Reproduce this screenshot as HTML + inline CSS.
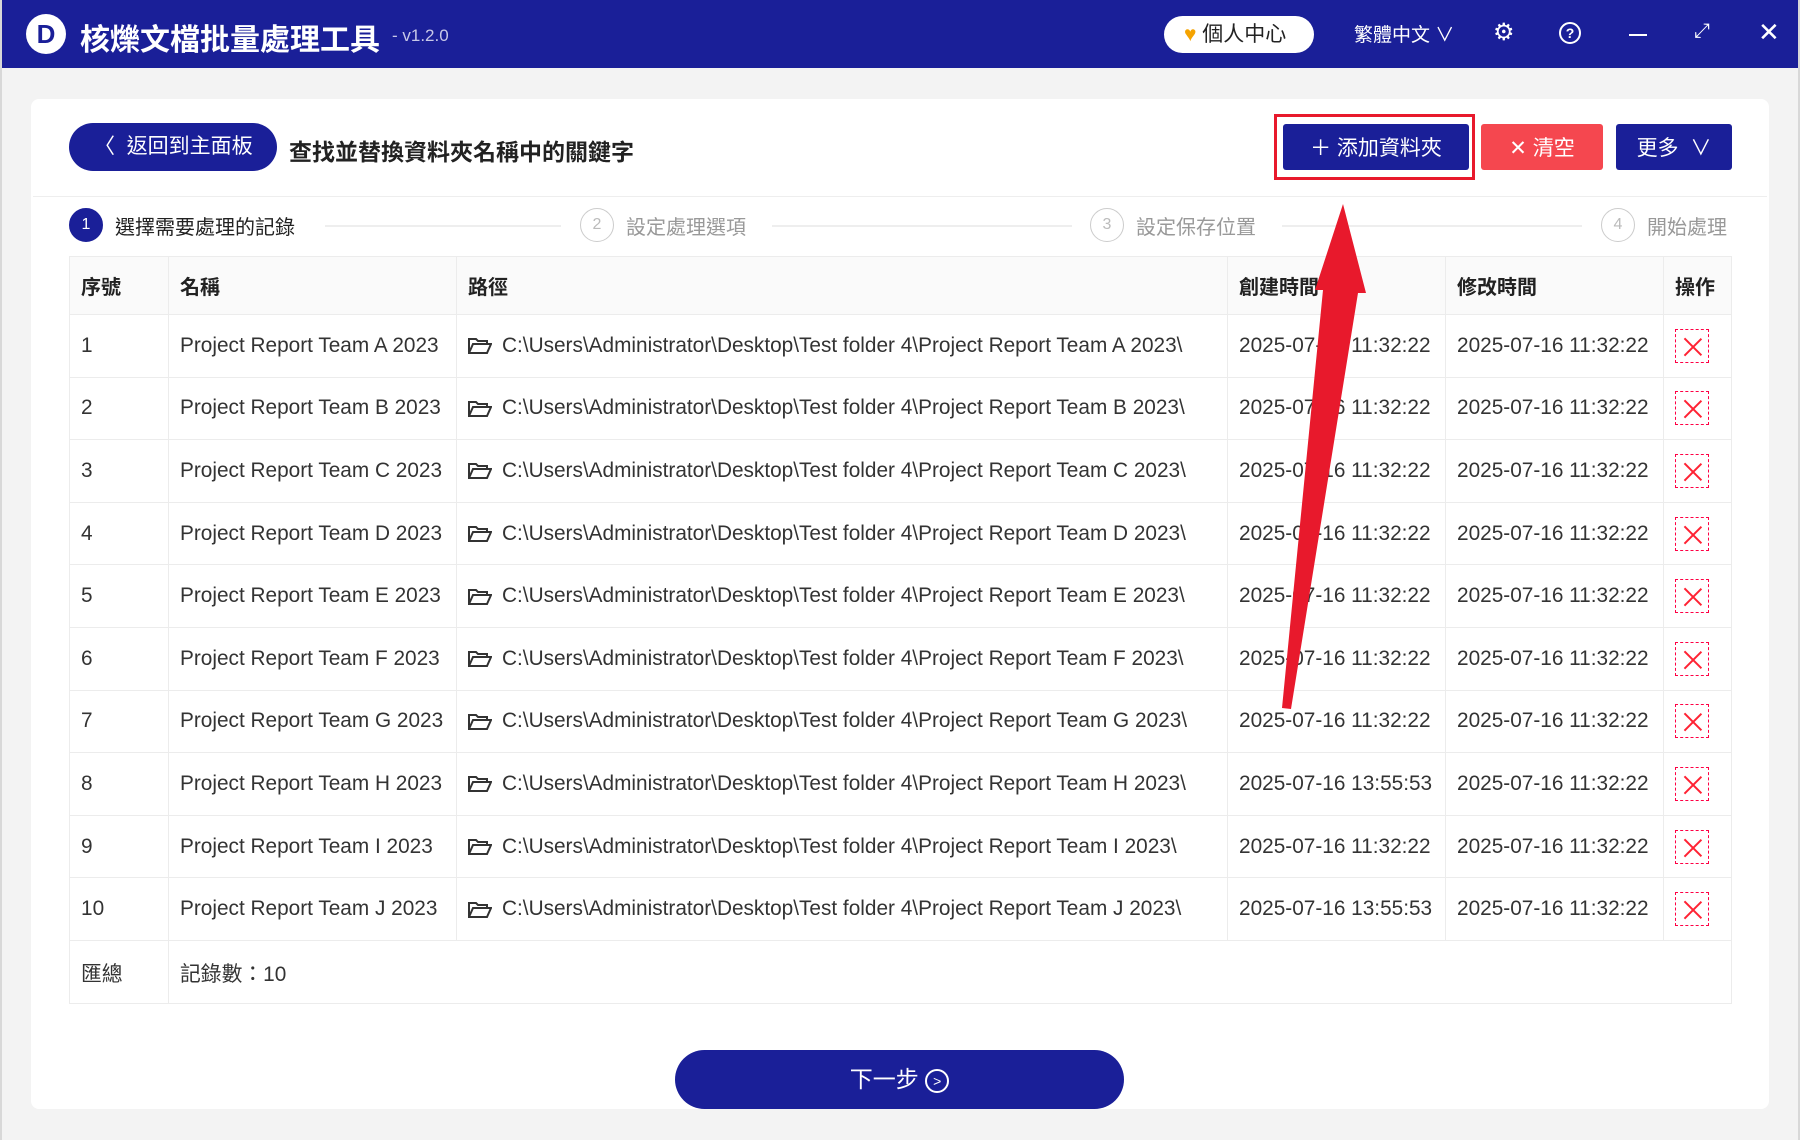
<!DOCTYPE html>
<html><head><meta charset="utf-8">
<style>
*{margin:0;padding:0;box-sizing:border-box}
body{width:1800px;height:1140px;overflow:hidden;background:#d8d8d8;font-family:"Liberation Sans","Noto Sans CJK TC",sans-serif;position:relative}
.win{position:absolute;left:2px;top:0;width:1796px;height:1140px;background:#f3f3f3}
.hdr{position:absolute;left:0;top:0;width:100%;height:68px;background:#1a1f98;color:#fff}
.abs{position:absolute}
.card{position:absolute;left:29px;top:99px;width:1738px;height:1010px;background:#fff;border-radius:8px}
.btn{position:absolute;color:#fff;font-size:21px;display:flex;align-items:center;justify-content:center;border-radius:3px}
table{position:absolute;left:67px;top:256px;width:1663px;border-collapse:collapse;font-size:20.8px;color:#333}
td,th{border:1px solid #ececec;text-align:left;padding:0 11px;white-space:nowrap}
th{height:58px;background:#fafafa;font-weight:bold;color:#222;font-size:20px}
td{height:62.6px}
.x{display:inline-block;width:34px;height:34px;border:1px dashed #f04;position:relative;vertical-align:middle}
.x:before,.x:after{content:"";position:absolute;left:16px;top:5px;width:1.5px;height:24px;background:#f23;transform:rotate(45deg)}
.x:after{transform:rotate(-45deg)}
.fd{display:inline-block;vertical-align:middle;margin-right:10px}
.step{position:absolute;top:208px;font-size:20px;color:#999;display:flex;align-items:center}
.step i{display:inline-block;width:34px;height:34px;border-radius:50%;border:1.5px solid #ccc;font-style:normal;font-size:16px;text-align:center;line-height:31px;margin-right:12px;color:#bbb}
.line{position:absolute;top:225px;height:2px;background:#eee}
</style></head><body>
<div class="win">
<div class="hdr">
 <div class="abs" style="left:24px;top:14px;width:40px;height:40px;border-radius:50%;background:#fff;color:#1a1f98;font-weight:bold;font-size:26px;text-align:center;line-height:40px">D</div>
 <div class="abs" style="left:78px;top:15px;font-size:30px;font-weight:bold">核爍文檔批量處理工具</div>
 <div class="abs" style="left:390px;top:26px;font-size:17px;color:#c8c8e8">- v1.2.0</div>
 <div class="abs" style="left:1162px;top:16px;width:150px;height:37px;border-radius:19px;background:#fff;color:#222;font-size:21px;line-height:37px;padding-left:20px"><span style="color:#f5a300">♥</span> 個人中心</div>
 <div class="abs" style="left:1352px;top:20px;font-size:19px">繁體中文 ∨</div>
 <div class="abs" style="left:1491px;top:21px;font-size:24px;line-height:24px">⚙</div>
 <div class="abs" style="left:1557px;top:22px;width:22px;height:22px;border:2px solid #fff;border-radius:50%;font-size:14px;text-align:center;line-height:18px;font-weight:bold">?</div>
 <div class="abs" style="left:1627px;top:34px;width:18px;height:2px;background:#fff"></div>
 <div class="abs" style="left:1692px;top:20px;font-size:20px">⤢</div>
 <div class="abs" style="left:1756px;top:17px;font-size:26px">✕</div>
</div>
<div class="card"></div>
<div class="abs" style="left:67px;top:123px;width:208px;height:48px;border-radius:24px;background:#1a1f98;color:#fff;font-size:21px;line-height:48px;padding-left:25px">〈&nbsp; 返回到主面板</div>
<div class="abs" style="left:287px;top:133px;font-size:23px;font-weight:bold;color:#222">查找並替換資料夾名稱中的關鍵字</div>
<div class="abs" style="left:1272px;top:114px;width:201px;height:66px;border:3px solid #e8192c"></div>
<div class="btn" style="left:1281px;top:124px;width:186px;height:46px;background:#1a1f98">＋ 添加資料夾</div>
<div class="btn" style="left:1479px;top:124px;width:122px;height:46px;background:#f5474f">✕ 清空</div>
<div class="btn" style="left:1614px;top:124px;width:116px;height:46px;background:#1a1f98">更多 &nbsp;∨</div>
<div class="abs" style="left:31px;top:196px;width:1734px;height:1px;background:#eee"></div>
<div class="step" style="left:67px;color:#222"><i style="background:#1a1f98;border-color:#1a1f98;color:#fff">1</i>選擇需要處理的記錄</div>
<div class="line" style="left:323px;width:236px"></div>
<div class="step" style="left:578px"><i>2</i>設定處理選項</div>
<div class="line" style="left:770px;width:300px"></div>
<div class="step" style="left:1088px"><i>3</i>設定保存位置</div>
<div class="line" style="left:1280px;width:300px"></div>
<div class="step" style="left:1599px"><i>4</i>開始處理</div>
<table>
<tr><th style="width:99px">序號</th><th style="width:288px">名稱</th><th style="width:771px">路徑</th><th style="width:218px">創建時間</th><th style="width:218px">修改時間</th><th>操作</th></tr>
<tr><td>1</td><td>Project Report Team A 2023</td><td><svg class="fd" width="24" height="18" viewBox="0 0 24 18"><path d="M1 16V2h7l2 2h9v3M1 16l4-9h18l-4 9z" fill="none" stroke="#333" stroke-width="2"/></svg>C:\Users\Administrator\Desktop\Test folder 4\Project Report Team A 2023\</td><td>2025-07-16 11:32:22</td><td>2025-07-16 11:32:22</td><td><span class="x"></span></td></tr>
<tr><td>2</td><td>Project Report Team B 2023</td><td><svg class="fd" width="24" height="18" viewBox="0 0 24 18"><path d="M1 16V2h7l2 2h9v3M1 16l4-9h18l-4 9z" fill="none" stroke="#333" stroke-width="2"/></svg>C:\Users\Administrator\Desktop\Test folder 4\Project Report Team B 2023\</td><td>2025-07-16 11:32:22</td><td>2025-07-16 11:32:22</td><td><span class="x"></span></td></tr>
<tr><td>3</td><td>Project Report Team C 2023</td><td><svg class="fd" width="24" height="18" viewBox="0 0 24 18"><path d="M1 16V2h7l2 2h9v3M1 16l4-9h18l-4 9z" fill="none" stroke="#333" stroke-width="2"/></svg>C:\Users\Administrator\Desktop\Test folder 4\Project Report Team C 2023\</td><td>2025-07-16 11:32:22</td><td>2025-07-16 11:32:22</td><td><span class="x"></span></td></tr>
<tr><td>4</td><td>Project Report Team D 2023</td><td><svg class="fd" width="24" height="18" viewBox="0 0 24 18"><path d="M1 16V2h7l2 2h9v3M1 16l4-9h18l-4 9z" fill="none" stroke="#333" stroke-width="2"/></svg>C:\Users\Administrator\Desktop\Test folder 4\Project Report Team D 2023\</td><td>2025-07-16 11:32:22</td><td>2025-07-16 11:32:22</td><td><span class="x"></span></td></tr>
<tr><td>5</td><td>Project Report Team E 2023</td><td><svg class="fd" width="24" height="18" viewBox="0 0 24 18"><path d="M1 16V2h7l2 2h9v3M1 16l4-9h18l-4 9z" fill="none" stroke="#333" stroke-width="2"/></svg>C:\Users\Administrator\Desktop\Test folder 4\Project Report Team E 2023\</td><td>2025-07-16 11:32:22</td><td>2025-07-16 11:32:22</td><td><span class="x"></span></td></tr>
<tr><td>6</td><td>Project Report Team F 2023</td><td><svg class="fd" width="24" height="18" viewBox="0 0 24 18"><path d="M1 16V2h7l2 2h9v3M1 16l4-9h18l-4 9z" fill="none" stroke="#333" stroke-width="2"/></svg>C:\Users\Administrator\Desktop\Test folder 4\Project Report Team F 2023\</td><td>2025-07-16 11:32:22</td><td>2025-07-16 11:32:22</td><td><span class="x"></span></td></tr>
<tr><td>7</td><td>Project Report Team G 2023</td><td><svg class="fd" width="24" height="18" viewBox="0 0 24 18"><path d="M1 16V2h7l2 2h9v3M1 16l4-9h18l-4 9z" fill="none" stroke="#333" stroke-width="2"/></svg>C:\Users\Administrator\Desktop\Test folder 4\Project Report Team G 2023\</td><td>2025-07-16 11:32:22</td><td>2025-07-16 11:32:22</td><td><span class="x"></span></td></tr>
<tr><td>8</td><td>Project Report Team H 2023</td><td><svg class="fd" width="24" height="18" viewBox="0 0 24 18"><path d="M1 16V2h7l2 2h9v3M1 16l4-9h18l-4 9z" fill="none" stroke="#333" stroke-width="2"/></svg>C:\Users\Administrator\Desktop\Test folder 4\Project Report Team H 2023\</td><td>2025-07-16 13:55:53</td><td>2025-07-16 11:32:22</td><td><span class="x"></span></td></tr>
<tr><td>9</td><td>Project Report Team I 2023</td><td><svg class="fd" width="24" height="18" viewBox="0 0 24 18"><path d="M1 16V2h7l2 2h9v3M1 16l4-9h18l-4 9z" fill="none" stroke="#333" stroke-width="2"/></svg>C:\Users\Administrator\Desktop\Test folder 4\Project Report Team I 2023\</td><td>2025-07-16 11:32:22</td><td>2025-07-16 11:32:22</td><td><span class="x"></span></td></tr>
<tr><td>10</td><td>Project Report Team J 2023</td><td><svg class="fd" width="24" height="18" viewBox="0 0 24 18"><path d="M1 16V2h7l2 2h9v3M1 16l4-9h18l-4 9z" fill="none" stroke="#333" stroke-width="2"/></svg>C:\Users\Administrator\Desktop\Test folder 4\Project Report Team J 2023\</td><td>2025-07-16 13:55:53</td><td>2025-07-16 11:32:22</td><td><span class="x"></span></td></tr>
<tr><td style="height:58px">匯總</td><td colspan="5">記錄數：10</td></tr>
</table>
<div class="abs" style="left:673px;top:1050px;width:449px;height:59px;border-radius:30px;background:#1a1f98;color:#fff;font-size:23px;text-align:center;line-height:59px">下一步 <span style="display:inline-block;width:24px;height:24px;border:2px solid #fff;border-radius:50%;font-size:14px;line-height:20px;vertical-align:middle">&gt;</span></div>
<svg class="abs" style="left:0;top:0" width="1800" height="1140"><path d="M1280 708 L1321 290 L1313 290 L1341 204 L1364 293 L1356 293 L1289 709 Z" fill="#e8192c"/></svg>
</div>
</body></html>
